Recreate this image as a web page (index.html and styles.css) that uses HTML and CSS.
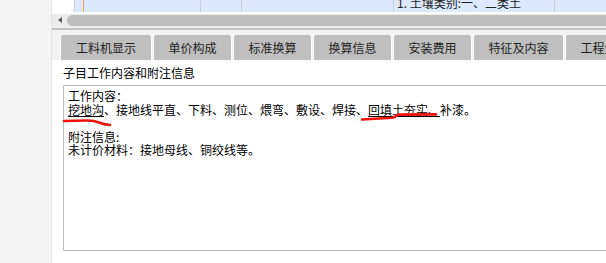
FILE: index.html
```html
<!DOCTYPE html>
<html lang="zh-CN">
<head>
<meta charset="utf-8">
<title>子目工作内容和附注信息</title>
<link rel="stylesheet" href="styles.css">
</head>
<body>
<div class="app">
  <aside class="side"></aside>
  <main class="pane">
    <div class="grid-row">
      <div class="cell c-head"></div>
      <div class="cell c-sel"></div>
      <div class="cell c-a"></div>
      <div class="cell c-b"></div>
      <div class="cell c-c"></div>
      <div class="cell c-d"><span class="cell-text">1. 土壤类别:一、二类土</span></div>
      <div class="cell c-e"></div>
    </div>
    <div class="hscroll">
      <span class="arrow"></span>
      <div class="thumb"></div>
    </div>
    <div class="sep"></div>
    <div class="tabs">
      <div class="tab">工料机显示</div>
      <div class="tab">单价构成</div>
      <div class="tab">标准换算</div>
      <div class="tab">换算信息</div>
      <div class="tab">安装费用</div>
      <div class="tab">特征及内容</div>
      <div class="tab">工程量明细</div>
    </div>
    <div class="content">
      <div class="caption">子目工作内容和附注信息</div>
      <div class="box">
        <div class="line">工作内容：</div>
        <div class="line"><span class="ul">挖地沟</span>、接地线平直、下料、测位、煨弯、敷设、焊接、<span class="ul">回填土夯实、</span>补漆。</div>
        <div class="line">&nbsp;</div>
        <div class="line">附注信息:</div>
        <div class="line">未计价材料：接地母线、铜绞线等。</div>
        <svg class="marks" width="400" height="50" viewBox="0 0 400 50">
          <path d="M1 36 L25 35.5 Q31 35.5 36 37.5 Q41 39.5 47 40" />
          <path d="M299 34.5 L329 32.8 Q332 32.5 333 31 L335 29.6 L373 29.4" />
        </svg>
      </div>
    </div>
  </main>
</div>
</body>
</html>
```

FILE: styles.css
```css
* { box-sizing: border-box; }
html, body {
  margin: 0;
  padding: 0;
  width: 606px;
  height: 263px;
  overflow: hidden;
  background: #ffffff;
  font-family: "Noto Sans CJK SC", "Liberation Sans", sans-serif;
  font-size: 12px;
  color: #000;
}
.app {
  display: flex;
  width: 606px;
  height: 263px;
}
.side {
  width: 52px;
  flex: 0 0 52px;
  background: #f4f4f4;
  border-right: 1px solid #e6e6e6;
}
.pane {
  flex: 1;
  display: flex;
  flex-direction: column;
  min-width: 0;
  overflow: hidden;
}
/* table row */
.grid-row {
  display: flex;
  height: 12px;
  flex: 0 0 12px;
  overflow: hidden;
  background: #dce8fb;
}
.cell {
  height: 12px;
  border-right: 1px solid #c6ccd6;
  overflow: hidden;
  flex: 0 0 auto;
}
.c-head { width: 23px; background: #ffffff; }
.c-sel { width: 9px; border-right: 1px solid #f1a24a; }
.c-a { width: 117px; }
.c-b { width: 41px; }
.c-c { width: 152px; }
.c-d { width: 161px; padding-left: 3px; }
.c-e { flex: 1 1 auto; border-right: 0; }
.cell-text {
  display: block;
  line-height: 12px;
  margin-top: -3px;
  color: #222;
  white-space: nowrap;
}
/* horizontal scrollbar */
.hscroll {
  display: flex;
  align-items: center;
  height: 12px;
  flex: 0 0 12px;
  margin-top: 2px;
  background: #ebebeb;
  padding-left: 6px;
}
.arrow {
  width: 0;
  height: 0;
  border-top: 3px solid transparent;
  border-bottom: 3px solid transparent;
  border-right: 4px solid #555;
  margin-right: 5px;
}
.thumb {
  flex: 1;
  height: 11px;
  margin-top: 1px;
  background: #bebebe;
  border-radius: 6px 0 0 6px;
}
.sep {
  flex: 0 0 4px;
  height: 4px;
  background: #eeeeee;
  border-bottom: 2px solid #c1c1c1;
}
/* tabs */
.tabs {
  display: flex;
  gap: 3px;
  flex: 0 0 30px;
  height: 30px;
  padding: 5px 0 0 9px;
  background: #f2f2f2;
  white-space: nowrap;
}
.tab {
  flex: 0 0 auto;
  height: 25px;
  line-height: 25px;
  padding: 0 14.5px;
  background: #bfbfbf;
  border-radius: 2px 2px 0 0;
  color: #1e1e1e;
  box-shadow: 1px 0 0 #ffffff, -1px 0 0 #ffffff;
}
.tab:first-child { padding: 0 15px; }
/* content */
.content {
  flex: 1;
  display: flex;
  flex-direction: column;
  padding: 6px 0 0 11px;
  background: #ffffff;
}
.caption {
  line-height: 14px;
  height: 14px;
  color: #000;
}
.box {
  position: relative;
  margin-top: 5px;
  height: 166px;
  border: 1px solid #bcbcbc;
  border-right: 0;
  padding: 3px 4px;
}
.line {
  line-height: 13.5px;
  height: 13.5px;
  white-space: nowrap;
}
.ul {
  text-decoration: underline;
  text-underline-offset: 1px;
}
.marks {
  position: absolute;
  left: -1px;
  top: -1px;
  overflow: visible;
  pointer-events: none;
}
.marks path {
  fill: none;
  stroke: #ee1208;
  stroke-width: 2.6;
  stroke-linecap: round;
  stroke-linejoin: round;
}
```
